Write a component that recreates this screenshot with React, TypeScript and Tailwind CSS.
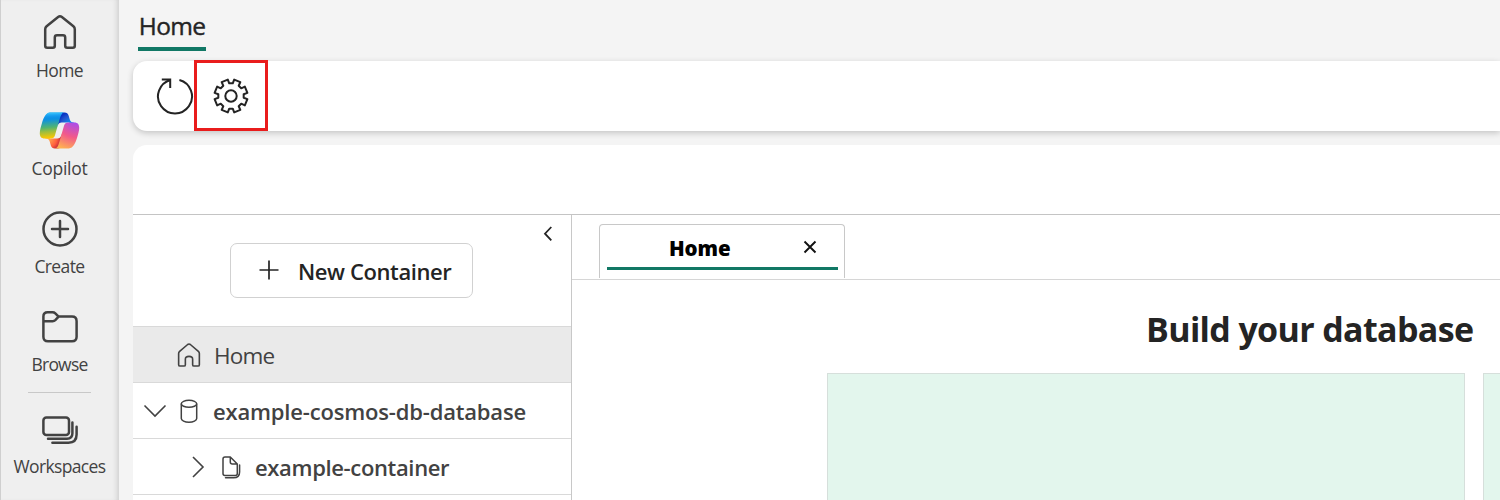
import type { ReactNode } from "react";

const GEAR_PATH = (() => {
  const points: string[] = [];
  const at = (deg: number, r: number) => {
    const a = (deg * Math.PI) / 180;
    points.push(`${(20 + r * Math.sin(a)).toFixed(2)} ${(20 - r * Math.cos(a)).toFixed(2)}`);
  };
  for (let k = 0; k < 8; k++) {
    at(k * 45 - 8, 12.8);
    at(k * 45 + 8, 12.8);
    at(k * 45 + 11, 16.7);
    at(k * 45 + 34, 16.7);
  }
  return `M${points.join("L")}Z`;
})();

function CopilotLogo() {
  return (
    <svg viewBox="0 0 48 48" className="mt-px h-[43px] w-[43px] shrink-0">
      <defs>
        <radialGradient id="cpA" cx="0" cy="0" r="1" gradientUnits="userSpaceOnUse" gradientTransform="matrix(-10.96 -13.39 12.59 -10.31 38 20.5)">
          <stop offset=".1" stopColor="#00AEFF" />
          <stop offset=".77" stopColor="#2253CE" />
          <stop offset="1" stopColor="#0736C4" />
        </radialGradient>
        <radialGradient id="cpB" cx="0" cy="0" r="1" gradientUnits="userSpaceOnUse" gradientTransform="matrix(9.88 12.57 -12.19 9.58 11.1 32.8)">
          <stop offset="0" stopColor="#FFB657" />
          <stop offset=".63" stopColor="#FF5F3D" />
          <stop offset=".92" stopColor="#C02B3C" />
        </radialGradient>
        <linearGradient id="cpC" x1="12.5" y1="7.5" x2="14.8" y2="33.9" gradientUnits="userSpaceOnUse">
          <stop offset=".16" stopColor="#0D91E1" />
          <stop offset=".49" stopColor="#52B471" />
          <stop offset=".65" stopColor="#98BD42" />
          <stop offset=".94" stopColor="#FFC800" />
        </linearGradient>
        <linearGradient id="cpD" x1="14.5" y1="4" x2="15.75" y2="32.9" gradientUnits="userSpaceOnUse">
          <stop offset="0" stopColor="#3DCBFF" />
          <stop offset=".25" stopColor="#0588F7" stopOpacity="0" />
        </linearGradient>
        <radialGradient id="cpE" cx="0" cy="0" r="1" gradientUnits="userSpaceOnUse" gradientTransform="matrix(-12.67 36.24 -43.41 -15.18 41.3 12.1)">
          <stop offset=".07" stopColor="#A64CF0" />
          <stop offset=".5" stopColor="#F2598A" />
          <stop offset=".9" stopColor="#FFB152" />
        </radialGradient>
      </defs>
      <path fill="url(#cpA)" d="M34.142 7.325A4.63 4.63 0 0 0 29.7 4H28.35a4.63 4.63 0 0 0-4.554 3.794L21.48 20.407l.575-1.965a4.63 4.63 0 0 1 4.444-3.33h7.853l3.294 1.282 3.175-1.283h-.926a4.63 4.63 0 0 1-4.443-3.325z" />
      <path fill="url(#cpB)" d="M14.33 40.656A4.63 4.63 0 0 0 18.779 44h2.87a4.63 4.63 0 0 0 4.629-4.51l.312-12.163-.654 2.233a4.63 4.63 0 0 1-4.443 3.329h-7.919l-2.823-1.532-3.057 1.532h.912a4.63 4.63 0 0 1 4.447 3.344z" />
      <path fill="url(#cpC)" d="M29.5 4H13.46c-4.583 0-7.332 6.057-9.165 12.113C2.123 23.29-.72 32.885 7.503 32.885h6.925a4.63 4.63 0 0 0 4.456-3.358 2077 2077 0 0 1 4.971-17.156c.843-2.843 1.544-5.284 2.621-6.805C27.08 4.714 28.086 4 29.5 4" />
      <path fill="url(#cpD)" d="M29.5 4H13.46c-4.583 0-7.332 6.057-9.165 12.113C2.123 23.29-.72 32.885 7.503 32.885h6.925a4.63 4.63 0 0 0 4.456-3.358 2077 2077 0 0 1 4.971-17.156c.843-2.843 1.544-5.284 2.621-6.805C27.08 4.714 28.086 4 29.5 4" />
      <path fill="url(#cpE)" d="M18.498 44h16.04c4.582 0 7.332-6.058 9.165-12.115 2.172-7.177 5.013-16.775-3.208-16.775h-6.926a4.63 4.63 0 0 0-4.456 3.358 2084 2084 0 0 1-4.972 17.16c-.842 2.844-1.544 5.285-2.62 6.806-.604.852-1.61 1.566-3.023 1.566" />
    </svg>
  );
}

function Icon({ children, className }: { children: ReactNode; className: string }) {
  return (
    <svg viewBox="0 0 40 40" fill="none" stroke="currentColor" strokeLinecap="round" strokeLinejoin="round" className={className}>
      {children}
    </svg>
  );
}

const NAV_ICON = "h-10 w-10 shrink-0 stroke-[2.5]";

function NavItem({ icon, label, className }: { icon: ReactNode; label: string; className: string }) {
  return (
    <div className="flex w-full flex-col items-center">
      <div className="flex h-10 items-center justify-center">{icon}</div>
      <span className={`mt-[7px] whitespace-nowrap leading-[22px] ${className}`}>{label}</span>
    </div>
  );
}

function Sidebar() {
  return (
    <nav className="z-10 flex w-[119px] shrink-0 flex-col items-center border-l border-[#cfcfcf] bg-[#efefef] pr-px pt-3 text-[17.5px] text-[#424242] shadow-[inset_-5px_0_5px_-3px_#cfcfcf]">
      <div className="flex h-[98px] w-full"><NavItem label="Home" className="tracking-[-0.6px]" icon={
        <Icon className={NAV_ICON}>
          <path d="M18.1 5 6.6 14.2Q5.2 15.4 5.2 17.2V33.8Q5.2 35.8 7.2 35.8H12.8Q14.8 35.8 14.8 33.8V25.4Q14.8 23.2 17 23.2H23Q25.2 23.2 25.2 25.4V33.8Q25.2 35.8 27.2 35.8H32.8Q34.8 35.8 34.8 33.8V17.2Q34.8 15.4 33.4 14.2L21.9 5Q20 3.5 18.1 5Z" />
        </Icon>
      } /></div>
      <div className="flex h-[98px] w-full"><NavItem label="Copilot" className="tracking-[-0.3px]" icon={<CopilotLogo />} /></div>
      <div className="flex h-[98px] w-full"><NavItem label="Create" className="tracking-[-0.6px]" icon={
        <Icon className={NAV_ICON}>
          <circle cx="20" cy="21" r="16.5" />
          <path d="M20 13v16M12 21h16" />
        </Icon>
      } /></div>
      <div className="flex h-[86px] w-full"><NavItem label="Browse" className="tracking-[-0.8px]" icon={
        <Icon className={NAV_ICON}>
          <path d="M3.4 15V10.5Q3.4 6.2 7.7 6.2H12.5Q14.2 6.2 15.3 7.3L18.6 10.6H32Q36.6 10.6 36.6 15.2V30.8Q36.6 35.3 32 35.3H8Q3.4 35.3 3.4 30.8ZM3.4 15.2H12.6Q14.2 15.2 15.3 14.1L18.6 10.6" />
        </Icon>
      } /></div>
      <div className="mb-[15px] h-px w-[63px] shrink-0 bg-[#c8c8c8]" />
      <NavItem label="Workspaces" className="tracking-[-0.65px]" icon={
        <Icon className={NAV_ICON}>
          <rect x="3.4" y="9.4" width="25.6" height="17.6" rx="3" />
          <path d="M8 30.7H27Q32.4 30.7 32.4 25.3V14.5M12.4 34.7H28.5Q36.6 34.7 36.6 26.6V18.8" />
        </Icon>
      } />
    </nav>
  );
}

function TopArea() {
  return (
    <>
      <div className="flex h-[61px] pl-[19px] pt-[5px]">
        <div className="flex h-[46px] w-[68px] flex-col items-center border-b-4 border-[#117865]">
          <span className="whitespace-nowrap text-[24.5px] leading-[42px] tracking-[-0.7px] text-[#242424] [-webkit-text-stroke:0.4px]">Home</span>
        </div>
      </div>
      <div className="ml-[14px] flex h-[70px] shrink-0 items-center rounded-l-[14px] bg-white pl-[22px] text-[#242424] shadow-[0_2px_6px_rgba(0,0,0,0.2)]">
        <Icon className="mt-[-1px] h-10 w-10 shrink-0 stroke-2">
          <path d="M24.4 4A17 17 0 1 1 15.6 4" strokeLinecap="butt" />
          <path d="M6.8 3.5H15.2V12" strokeLinecap="butt" strokeLinejoin="miter" />
        </Icon>
        <div className="-mt-px ml-[-1px] flex h-[71px] w-[74px] items-center justify-center border-[3px] border-[#e91c1c]">
          <Icon className="h-10 w-10 stroke-2">
            <path d={GEAR_PATH} />
            <circle cx="20" cy="20" r="5.7" />
          </Icon>
        </div>
      </div>
    </>
  );
}

function Explorer() {
  return (
    <aside className="flex w-[439px] shrink-0 flex-col border-r border-[#c8c8c8] text-[#424242]">
      <div className="relative flex h-[111px] shrink-0 pl-[97px] pt-7">
        <button className="flex h-[55px] w-[243px] items-center rounded-[7px] border border-[#d1d1d1] pl-7 text-[#242424]">
          <svg viewBox="0 0 20 20" className="mt-[-2px] h-5 w-5" fill="none" stroke="currentColor" strokeWidth="1.7">
            <path d="M10 .5v19M.5 10h19" />
          </svg>
          <span className="ml-[19px] mt-px whitespace-nowrap text-[22px] font-semibold tracking-[-0.4px]">New Container</span>
        </button>
        <svg viewBox="0 0 10 16" className="absolute right-[18px] top-[11px] h-4 w-[10px]" fill="none" stroke="#242424" strokeWidth="1.8">
          <path d="M8.3 1 2 7.7l6.3 6.7" />
        </svg>
      </div>
      <div className="flex h-14 shrink-0 items-center border-t border-[#d9d9d9] bg-[#eaeaea] pl-[42px]">
        <Icon className="h-7 w-7 stroke-[2.3]">
          <path d="M18.1 5 6.6 14.8Q5.2 16 5.2 17.8V33.8Q5.2 35.8 7.2 35.8H12.8Q14.8 35.8 14.8 33.8V26Q14.8 22 20 22T25.2 26V33.8Q25.2 35.8 27.2 35.8H32.8Q34.8 35.8 34.8 33.8V17.8Q34.8 16 33.4 14.8L21.9 5Q20 3.5 18.1 5Z" />
        </Icon>
        <span className="ml-[11px] mt-[3px] whitespace-nowrap text-[22.5px] tracking-[-0.8px]">Home</span>
      </div>
      <div className="flex h-14 shrink-0 items-center border-t border-[#d9d9d9] pl-[10px]">
        <svg viewBox="0 0 24 14" className="h-[14px] w-6" fill="none" stroke="currentColor" strokeWidth="1.6">
          <path d="M1.5 1.5 12 12 22.5 1.5" />
        </svg>
        <svg viewBox="0 0 20 26" className="ml-[12px] h-[26px] w-5" fill="none" stroke="currentColor" strokeWidth="1.5">
          <ellipse cx="10" cy="5.8" rx="7.7" ry="3.5" />
          <path d="M2.3 5.8v14.7c0 2 3.4 3.7 7.7 3.7s7.7-1.7 7.7-3.7V5.8" />
        </svg>
        <span className="ml-[14px] mt-px whitespace-nowrap text-[22px] font-semibold tracking-[-0.18px]">example-cosmos-db-database</span>
      </div>
      <div className="flex h-14 shrink-0 items-center border-t border-[#d9d9d9] pl-[58px]">
        <svg viewBox="0 0 14 24" className="h-6 w-[14px]" fill="none" stroke="currentColor" strokeWidth="1.6">
          <path d="M2 2 12 12 2 22" />
        </svg>
        <svg viewBox="0 0 22 26" className="ml-[15px] h-[26px] w-[22px]" fill="none" stroke="currentColor" strokeWidth="1.5" strokeLinejoin="round">
          <path d="M3 5Q3 3 5 3H10.3L17.3 10V19.5Q17.3 21.5 15.3 21.5H5Q3 21.5 3 19.5ZM10.3 3V8Q10.3 10 12.3 10H17.3" />
          <path d="M5.5 23.8H13.5Q19.6 23.8 19.6 18V11" strokeLinecap="round" />
        </svg>
        <span className="ml-[13px] mt-px whitespace-nowrap text-[22px] font-semibold tracking-[-0.35px]">example-container</span>
      </div>
      <div className="h-14 shrink-0 border-t border-[#d9d9d9]" />
    </aside>
  );
}

function Workspace() {
  return (
    <main className="flex min-w-0 flex-1 flex-col">
      <div className="flex h-[65px] shrink-0 border-b border-[#d6d6d6] pl-[27px] pt-[9px]">
        <div className="flex h-[54px] w-[246px] flex-col rounded-t-[4px] border border-b-0 border-[#c8c8c8] pl-[7px] pr-[6px]">
          <div className="flex h-[45px] items-center border-b-[3px] border-[#117865] pl-[62px]">
            <span className="mt-[5px] w-[64px] whitespace-nowrap text-[20.5px] font-extrabold tracking-[-0.1px] text-black">Home</span>
            <svg viewBox="0 0 14 14" className="ml-[70px] mt-px h-[14px] w-[14px]" fill="none" stroke="#111" strokeWidth="1.9">
              <path d="M1.5 1.5 12.5 12.5M12.5 1.5 1.5 12.5" />
            </svg>
          </div>
        </div>
      </div>
      <div className="flex h-[93px] shrink-0 items-center pl-[574px] pt-[5px]">
        <h1 className="whitespace-nowrap text-[34px] font-bold tracking-[-0.65px] text-[#242424]">Build your database</h1>
      </div>
      <div className="flex flex-1 gap-[18px] overflow-hidden pl-[255px]">
        <div className="h-[300px] w-[638px] shrink-0 border border-[#d6dfdb] bg-[#e3f6ed]" />
        <div className="h-[300px] w-[638px] shrink-0 border border-[#d6dfdb] bg-[#e3f6ed]" />
      </div>
    </main>
  );
}

export default function App() {
  return (
    <div className="flex h-[500px] w-[1500px] overflow-hidden bg-[#f4f4f4] font-['Open_Sans','Noto_Sans',sans-serif]">
      <Sidebar />
      <div className="flex min-w-0 flex-1 flex-col">
        <TopArea />
        <div className="ml-[14px] mt-[14px] flex min-h-0 flex-1 flex-col rounded-tl-[14px] bg-white">
          <div className="h-[70px] shrink-0 border-b border-[#c4c4c4]" />
          <div className="flex min-h-0 flex-1 overflow-hidden">
            <Explorer />
            <Workspace />
          </div>
        </div>
      </div>
    </div>
  );
}
